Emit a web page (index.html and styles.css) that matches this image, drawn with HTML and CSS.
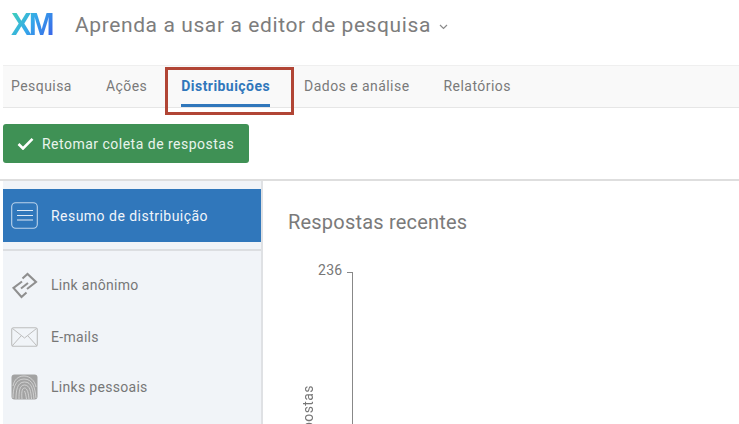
FILE: index.html
```html
<!DOCTYPE html>
<html lang="pt">
<head>
<meta charset="utf-8">
<title>Distribuições</title>
<link rel="stylesheet" href="styles.css">
</head>
<body>
<header class="top">
  <span class="logo">XM</span>
  <h1 class="title">Aprenda a usar a editor de pesquisa</h1>
  <svg class="caret" width="9" height="6" viewBox="0 0 9 6"><path d="M1 1l3.5 3.5L8 1" fill="none" stroke="#8a8a8a" stroke-width="1.2"/></svg>
</header>
<nav class="tabs">
  <a class="tab">Pesquisa</a>
  <a class="tab">Ações</a>
  <a class="tab active">Distribuições<span class="mark"></span></a>
  <a class="tab">Dados e análise</a>
  <a class="tab">Relatórios</a>
</nav>
<div class="actions">
  <button class="resume">
    <svg width="17" height="13" viewBox="0 0 17 13"><path d="M1.5 7l4.500 4.500L15.500 1.800" fill="none" stroke="#fff" stroke-width="2.600"/></svg>
    Retomar coleta de respostas
  </button>
</div>
<div class="main">
  <aside class="side">
    <div class="item current">
      <svg class="ico" width="27" height="27" viewBox="0 0 27 27"><rect x="0.7" y="0.7" width="25.600" height="25.600" rx="4" fill="none" stroke="#bcd4ec" stroke-width="1.100"/><path d="M6 8.500h16M6 13.500h16M6 18h16" stroke="#dfeaf6" stroke-width="1.100"/></svg>
      <span>Resumo de distribuição</span>
    </div>
    <div class="sep"></div>
    <div class="item link">
      <svg class="ico" width="27" height="27" viewBox="0 0 27 27"><g fill="none" stroke="#8f8f8f" stroke-width="2.100"><path d="M11 9.500L2.500 16l8 9 5-4.500"/><path d="M16 17l9-7-8.500-8-5 4.500"/><path d="M10 16.500l7-5.500"/></g></svg>
      <span>Link anônimo</span>
    </div>
    <div class="item mail">
      <svg class="ico" width="27" height="20" viewBox="0 0 27 20"><rect x="0.7" y="0.7" width="25.600" height="18.600" rx="2" fill="none" stroke="#bdbdbd" stroke-width="1.100"/><path d="M1.500 1.500l12 9.500 12-9.500M1.500 18.500l8.500-9.500M25.500 18.500L17 9" fill="none" stroke="#bdbdbd" stroke-width="1"/></svg>
      <span>E-mails</span>
    </div>
    <div class="item print">
      <svg class="ico" width="27" height="26" viewBox="0 0 27 26"><rect x="0.500" y="0.500" width="26" height="25" rx="3" fill="#a3a3a3"/><g fill="none" stroke="#dcdcdc" stroke-width="0.800"><path d="M2 12C3 6 7 2 13 2s11 5 12 11"/><path d="M2 24c0-9 2-19 11-19s11 9 12 19"/><path d="M5 25c0-8 1-17 8.500-17S22 16 23 25"/><path d="M8 25c0-6 0-14 5.500-14S20 18 20.500 25"/><path d="M11 25c-.5-5-.5-11 2.500-11s4 6 4.500 11"/><path d="M13.500 17c1 2 1.500 5 2 8"/></g></svg>
      <span>Links pessoais</span>
    </div>
  </aside>
  <section class="content">
    <h2 class="heading">Respostas recentes</h2>
    <div class="chart">
      <div class="ylabel">Respostas</div>
      <div class="tick">236</div>
      <div class="axis"></div>
    </div>
  </section>
</div>
</body>
</html>
```

FILE: styles.css
```css
*, *::after { box-sizing: border-box; }
html, body { margin: 0; height: 424px; overflow: hidden; }
body { background: #fff; font-family: Roboto, "Liberation Sans", sans-serif; color: #757575; }

.top { height: 65px; display: flex; align-items: center; padding: 0 0 15px 11px; }
.logo {
  width: 44px; font-family: "Liberation Sans", sans-serif; font-size: 31px; font-weight: 700; letter-spacing: -3px; line-height: 32px;
  background: linear-gradient(125deg, #3fd6b4 0%, #35a8ea 45%, #3a5ee8 95%);
  -webkit-background-clip: text; background-clip: text; color: transparent;
}
.title { margin: 0 0 0 20px; font-size: 21px; font-weight: 400; letter-spacing: 0.6px; color: #7d7d7d; }
.caret { margin: 4px 0 0 8px; }

.tabs { margin-left: 3px; height: 43px; display: flex; gap: 34px; padding-left: 8px; background: #f9f9f9; border-top: 1px solid #efefef; border-bottom: 1px solid #e6e6e6; font-size: 14px; letter-spacing: 0.45px; }
.tab { position: relative; display: flex; align-items: center; height: 40px; color: #7a7a7a; }
.tab.active { color: #3077bb; font-weight: 700; }
.mark { position: absolute; left: 0; right: 0; top: 38px; height: 2.500px; background: #3077bb; }
.tab.active::after { content: ""; position: absolute; left: -16px; right: -24px; top: 1px; height: 48px; border: 3px solid #b14535; }

.actions { padding: 16px 0 0 3px; height: 73px; border-bottom: 2px solid #dedede; }
.resume { width: 246px; height: 39px; display: flex; align-items: center; gap: 8px; padding: 0 0 0 14px; border: 0; border-radius: 3px; background: #3f9155; color: #e9f4ec; font: 400 14px Roboto, sans-serif; letter-spacing: 0.49px; }

.main { display: flex; height: 243px; overflow: hidden; }
.side { margin-left: 3px; width: 260px; background: #f1f4f8; border-right: 2px solid #dfe1e4; padding-top: 8px; font-size: 14px; letter-spacing: 0.3px; }
.item { display: flex; align-items: center; gap: 13px; padding-left: 8px; color: #777; }
.ico { flex: none; }
.item.current { height: 53px; background: #3077bb; color: #f0f5fa; letter-spacing: 0.47px; }
.sep { margin-top: 7px; height: 2px; background: #dcdee1; }
.item.link { margin-top: 19px; height: 30px; }
.item.mail { margin-top: 22px; height: 30px; }
.item.print { margin-top: 20px; height: 30px; }

.content { flex: 1; padding: 28px 0 0 25px; }
.heading { margin: 0; font-size: 20px; font-weight: 400; letter-spacing: 0.2px; line-height: 26px; color: #7a7a7a; }
.chart { position: relative; margin-top: 27px; height: 200px; }
.tick { position: absolute; left: 30px; top: 0; font-size: 14px; letter-spacing: 0.3px; line-height: 16px; color: #777; }
.axis { position: absolute; left: 59px; top: 10px; bottom: 0; width: 6px; border-top: 1px solid #888; border-right: 1px solid #888; }
.ylabel { position: absolute; left: 13px; top: 123px; font-size: 14px; letter-spacing: 0.4px; line-height: 14px; writing-mode: vertical-rl; transform: rotate(180deg); color: #777; }
```
